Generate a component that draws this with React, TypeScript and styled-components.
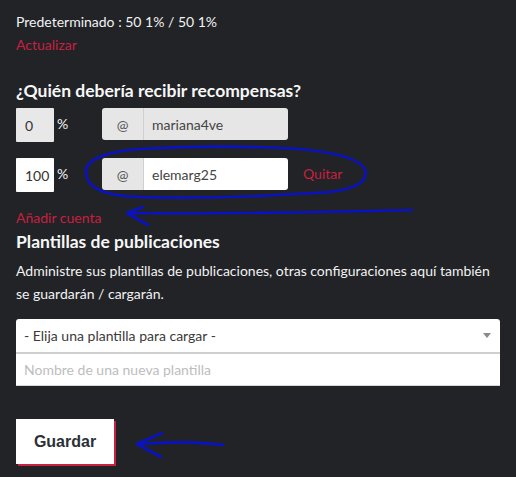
import React from 'react';
import styled, {createGlobalStyle} from 'styled-components';

const GlobalStyle = createGlobalStyle`
  html, body {
    margin: 0;
    padding: 0;
    background: #212327;
  }
  * {
    box-sizing: border-box;
  }
`;

const Page = styled.div`
  position: relative;
  width: 516px;
  height: 477px;
  overflow: hidden;
  background: #212327;
  color: #f2f2f2;
  font-family: Lato, 'Open Sans', sans-serif;
  font-size: 14px;
  padding: 12px 16px 0 16px;
  display: flex;
  flex-direction: column;
`;

const Line = styled.div`
  line-height: 20px;
  height: 20px;
`;

const RedLink = styled.a<{$mt?: number}>`
  display: block;
  color: #c8203f;
  line-height: 20px;
  margin-top: ${p => p.$mt ?? 0}px;
  cursor: pointer;
`;

const Heading = styled.h3<{$mt: number}>`
  margin: ${p => p.$mt}px 0 0 0;
  font-size: 17.5px;
  font-weight: 700;
  line-height: 22px;
  color: #f7f7f7;
`;

const BenefRow = styled.div<{$mt: number}>`
  display: grid;
  grid-template-columns: 86px 186px auto;
  align-items: start;
  margin-top: ${p => p.$mt}px;
`;

const PercentCell = styled.div`
  display: flex;
  align-items: flex-start;
  gap: 3px;
`;

const PercentInput = styled.div<{$disabled?: boolean}>`
  width: 38px;
  height: 34px;
  background: ${p => (p.$disabled ? '#e8e8e8' : '#ffffff')};
  color: #333;
  border-radius: 1px;
  padding-left: 9px;
  line-height: 36px;
  font-size: 14px;
`;

const PercentSign = styled.span`
  line-height: 32px;
  font-size: 14px;
`;

const Group = styled.div`
  display: flex;
  height: 32px;
  border-radius: 3px;
  overflow: hidden;
`;

const Addon = styled.div`
  width: 42px;
  background: #e6e6e6;
  border-right: 1px solid #cfcfcf;
  color: #555;
  display: flex;
  align-items: center;
  justify-content: center;
  font-size: 14px;
`;

const GroupInput = styled.div<{$disabled?: boolean}>`
  flex: 1;
  background: ${p => (p.$disabled ? '#e6e6e6' : '#ffffff')};
  color: #444;
  padding-left: 8px;
  display: flex;
  align-items: center;
  font-size: 14px;
`;

const Remove = styled.a`
  color: #c8203f;
  margin-left: 15px;
  line-height: 32px;
  cursor: pointer;
`;

const Paragraph = styled.p`
  margin: 6px 0 0 0;
  line-height: 23px;
  font-size: 14px;
`;

const Fields = styled.div`
  margin-top: 14px;
  display: flex;
  flex-direction: column;
`;

const Select = styled.div`
  height: 35px;
  background: #fff;
  border-radius: 3px 3px 0 0;
  border-bottom: 2px solid #cfcfcf;
  color: #3a3a3a;
  display: flex;
  align-items: center;
  justify-content: space-between;
  padding: 0 8px 0 8px;
  font-size: 14px;
`;

const Caret = styled.span`
  width: 0;
  height: 0;
  border-left: 4px solid transparent;
  border-right: 4px solid transparent;
  border-top: 5px solid #8a8a8a;
  margin-right: 1px;
`;

const TextField = styled.div`
  height: 32px;
  background: #fff;
  border-bottom: 1px solid #d6d6d6;
  color: #bdbdbd;
  display: flex;
  align-items: center;
  padding-left: 8px;
  font-size: 14px;
`;

const SaveButton = styled.button`
  margin-top: 33px;
  width: 98px;
  height: 45px;
  border: none;
  background: #fff;
  color: #2b3038;
  font-family: 'Liberation Sans', Arial, sans-serif;
  font-weight: 700;
  font-size: 16px;
  box-shadow: 2px 2px 0 #c8203f;
  cursor: pointer;
  padding: 0;
`;

const Scribble = styled.svg`
  position: absolute;
  top: 0;
  left: 0;
  pointer-events: none;
`;

function Annotations() {
  return (
    <Scribble width={516} height={477} viewBox="0 0 516 477">
      <g
        fill="none"
        stroke="#0a12c4"
        strokeWidth={2.6}
        strokeLinecap="round"
        strokeLinejoin="round"
      >
        <path d="M300 149 C250 146 190 146 140 149 C110 151 88 158 86 170 C85 186 100 196 140 197 C200 199 270 196 330 192 C360 188 368 180 365 170 C362 160 340 153 300 149 Z" />
        <path d="M412 210 C330 212 230 214 128 213" />
        <path d="M143 207 L127 213 L148 225" />
        <path d="M223 445 C195 441 165 442 137 444" />
        <path d="M162 433 L137 444 L161 457" />
      </g>
    </Scribble>
  );
}

export default function App() {
  return (
    <Page>
      <GlobalStyle />
      <Line>Predeterminado : 50 1% / 50 1%</Line>
      <RedLink $mt={3}>Actualizar</RedLink>
      <Heading $mt={25}>¿Quién debería recibir recompensas?</Heading>

      <BenefRow $mt={6}>
        <PercentCell>
          <PercentInput $disabled>0</PercentInput>
          <PercentSign>%</PercentSign>
        </PercentCell>
        <Group>
          <Addon>@</Addon>
          <GroupInput $disabled>mariana4ve</GroupInput>
        </Group>
      </BenefRow>

      <BenefRow $mt={16}>
        <PercentCell>
          <PercentInput>100</PercentInput>
          <PercentSign>%</PercentSign>
        </PercentCell>
        <Group>
          <Addon>@</Addon>
          <GroupInput>elemarg25</GroupInput>
        </Group>
        <Remove>Quitar</Remove>
      </BenefRow>

      <RedLink $mt={16}>Añadir cuenta</RedLink>
      <Heading $mt={3}>Plantillas de publicaciones</Heading>
      <Paragraph>
        Administre sus plantillas de publicaciones, otras configuraciones aquí
        también se guardarán / cargarán.
      </Paragraph>

      <Fields>
        <Select>
          <span>- Elija una plantilla para cargar -</span>
          <Caret />
        </Select>
        <TextField>Nombre de una nueva plantilla</TextField>
      </Fields>

      <SaveButton>Guardar</SaveButton>
      <Annotations />
    </Page>
  );
}
